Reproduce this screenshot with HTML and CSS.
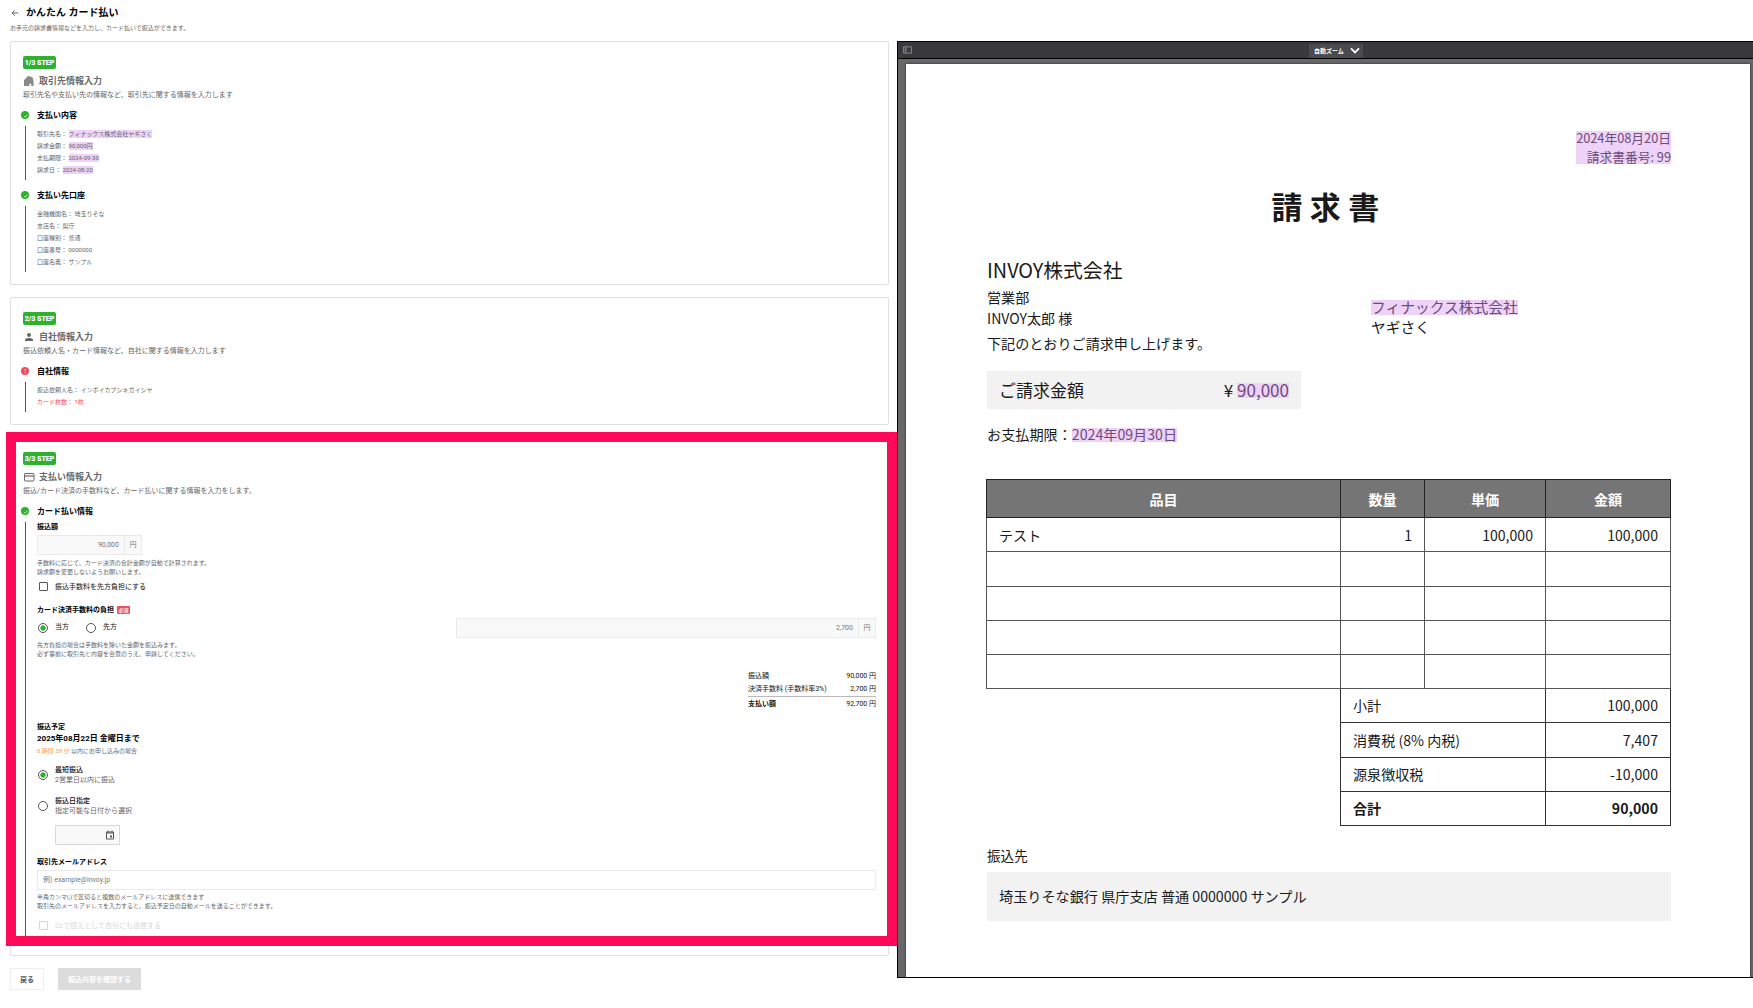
FILE: index.html
```html
<!DOCTYPE html>
<html lang="ja">
<head>
  <meta charset="UTF-8" />
  <meta name="viewport" content="width=device-width, initial-scale=1.0" />
  <title>かんたん カード払い</title>
  <link rel="stylesheet" href="styles.css">
</head>
<body>
  <!-- ヘッダー -->
  <header>
    <div class="page-title">
      <svg class="back-icon" viewBox="0 0 8 8"><path d="M7.2 4H1.2M3.8 1.3L1.1 4l2.7 2.7" fill="none" stroke="#555" stroke-width="0.9"/></svg>
      <h1>かんたん カード払い</h1>
    </div>
    <p class="lead">お手元の請求書情報などを入力し、カード払いで振込ができます。</p>
  </header>

  <div class="layout">
    <main>
      <!-- STEP 1 -->
      <section class="card">
        <span class="step">1/3 STEP</span>
        <h2>
          <svg class="title-icon" viewBox="0 0 12 12"><path d="M1 11V5l2.5-2V2L6 1l3.6 1.4L10.6 6v5H8.2V8.8H6.4V11z" fill="#8a8a8a"/></svg>
          取引先情報入力
        </h2>
        <p class="desc">取引先名や支払い先の情報など、取引先に関する情報を入力します</p>

        <h3><svg class="state" viewBox="0 0 8 8"><circle cx="4" cy="4" r="4" fill="#2fb12f"/><path d="M3.2 5.2l1 .9 2.3-2.5" fill="none" stroke="#d5f5d5" stroke-width=".8"/></svg>支払い内容</h3>
        <div class="detail">
          <p>取引先名： <mark>フィナックス株式会社ヤギさく</mark></p>
          <p>請求金額： <mark>90,000円</mark></p>
          <p>支払期限： <mark>2024-09-30</mark></p>
          <p>請求日： <mark>2024-08-20</mark></p>
        </div>

        <h3 class="next"><svg class="state" viewBox="0 0 8 8"><circle cx="4" cy="4" r="4" fill="#2fb12f"/><path d="M3.2 5.2l1 .9 2.3-2.5" fill="none" stroke="#d5f5d5" stroke-width=".8"/></svg>支払い先口座</h3>
        <div class="detail">
          <p>金融機関名： 埼玉りそな</p>
          <p>支店名： 県庁</p>
          <p>口座種別： 普通</p>
          <p>口座番号： 0000000</p>
          <p>口座名義： サンプル</p>
        </div>
      </section>

      <!-- STEP 2 -->
      <section class="card">
        <span class="step">2/3 STEP</span>
        <h2>
          <svg class="title-icon" viewBox="0 0 12 12"><circle cx="6" cy="4.1" r="2" fill="#666"/><path d="M2 10V8.9C2 7.6 4.4 7 6 7s4 .6 4 1.9V10z" fill="#666"/></svg>
          自社情報入力
        </h2>
        <p class="desc">振込依頼人名・カード情報など、自社に関する情報を入力します</p>

        <h3><svg class="state" viewBox="0 0 8 8"><circle cx="4" cy="4" r="4" fill="#f04e5e"/><path d="M4 1.9v2.4M4 5.2v.9" stroke="#ffc4c9" stroke-width=".9"/></svg>自社情報</h3>
        <div class="detail">
          <p>振込依頼人名： インボイカブシキガイシヤ</p>
          <p class="error">カード枚数： 1枚</p>
        </div>
      </section>

      <!-- STEP 3 -->
      <section class="card current">
        <span class="step">3/3 STEP</span>
        <h2>
          <svg class="title-icon" viewBox="0 0 12 12"><rect x="1.5" y="2.5" width="9.5" height="7.5" rx=".6" fill="none" stroke="#666"/><path d="M1.5 5h9.5" stroke="#666" stroke-width="1.2"/></svg>
          支払い情報入力
        </h2>
        <p class="desc">振込/カード決済の手数料など、カード払いに関する情報を入力をします。</p>

        <h3><svg class="state" viewBox="0 0 8 8"><circle cx="4" cy="4" r="4" fill="#2fb12f"/><path d="M3.2 5.2l1 .9 2.3-2.5" fill="none" stroke="#d5f5d5" stroke-width=".8"/></svg>カード払い情報</h3>
        <div class="detail form">
          <label class="label first">振込額</label>
          <div class="amount small"><span class="value">90,000</span><span class="unit">円</span></div>
          <p class="help">手数料に応じて、カード決済の合計金額が自動で計算されます。<br>請求額を変更しないようお願いします。</p>
          <div class="check"><i class="box"></i>振込手数料を先方負担にする</div>

          <div class="label fee">カード決済手数料の負担<span class="required">必須</span></div>
          <div class="fee-row">
            <div class="radios">
              <i class="radio on"></i><span>当方</span>
              <i class="radio"></i><span>先方</span>
            </div>
            <div class="amount"><span class="value">2,700</span><span class="unit">円</span></div>
          </div>
          <p class="help fee-help">先方負担の場合は手数料を除いた金額を振込みます。<br>必ず事前に取引先と内容を合意のうえ、申請してください。</p>

          <div class="totals">
            <div><span>振込額</span><span>90,000 円</span></div>
            <div><span>決済手数料 (手数料率3%)</span><span>2,700 円</span></div>
            <div class="sum"><b>支払い額</b><span>92,700 円</span></div>
          </div>

          <div class="label schedule">振込予定</div>
          <p class="deadline">2025年08月22日 金曜日まで</p>
          <p class="remain"><em>6 時間 38 分</em> 以内にお申し込みの場合</p>

          <div class="option">
            <i class="radio on"></i>
            <div><b>最短振込</b><span>2営業日以内に振込</span></div>
          </div>
          <div class="option second">
            <i class="radio"></i>
            <div><b>振込日指定</b><span>指定可能な日付から選択</span></div>
          </div>
          <div class="date-input">
            <svg viewBox="0 0 10 10"><path d="M1.5 2h7v7h-7zM1.5 3h7M3 .6v1.6M7 .6v1.6" fill="none" stroke="#555"/><rect x="5" y="5.5" width="2" height="2" fill="#555"/></svg>
          </div>

          <label class="label mail">取引先メールアドレス</label>
          <div class="mail-input">例) example@invoy.jp</div>
          <p class="help mail-help">半角カンマ(,)で区切ると複数のメールアドレスに送信できます<br>取引先のメールアドレスを入力すると、振込予定日の自動メールを送ることができます。</p>
          <div class="check disabled"><i class="box"></i>Ccで控えとして自分にも送信する</div>
        </div>
        <div class="focus-frame"></div>
      </section>

      <div class="actions">
        <button class="btn-back">戻る</button>
        <button class="btn-confirm" disabled>振込内容を確認する</button>
      </div>
    </main>

    <!-- 請求書プレビュー -->
    <aside class="viewer">
      <div class="toolbar">
        <svg class="side-icon" viewBox="0 0 10 8"><path d="M.5.5h9v7h-9zM3.3.5v7" fill="none" stroke="#8f8f93"/><path d="M1.2 1v6M2.4 1v6" stroke="#77777b" stroke-width=".6"/></svg>
        <div class="zoom">自動ズーム<svg viewBox="0 0 10 7"><path d="M1 1.4l4 4 4-4" fill="none" stroke="#fff" stroke-width="1.8"/></svg></div>
      </div>
      <div class="canvas">
        <div class="sheet">
          <div class="meta">2024年08月20日<br>請求書番号: 99</div>
          <div class="doc-title">請求書</div>
          <div class="client">INVOY株式会社</div>
          <div class="parties">
            <div class="to">
              <p>営業部</p>
              <p>INVOY太郎 様</p>
              <p class="greeting">下記のとおりご請求申し上げます。</p>
            </div>
            <div class="from">
              <p><mark>フィナックス株式会社</mark></p>
              <p>ヤギさく</p>
            </div>
          </div>
          <div class="bill"><span>ご請求金額</span><span>¥ <mark>90,000</mark></span></div>
          <p class="due">お支払期限：<mark>2024年09月30日</mark></p>

          <table>
            <colgroup><col class="c-item"><col class="c-qty"><col class="c-unit"><col class="c-price"></colgroup>
            <tr><th>品目</th><th>数量</th><th>単価</th><th>金額</th></tr>
            <tr class="row"><td class="left">テスト</td><td>1</td><td>100,000</td><td>100,000</td></tr>
            <tr class="row odd"><td></td><td></td><td></td><td></td></tr>
            <tr class="row"><td></td><td></td><td></td><td></td></tr>
            <tr class="row"><td></td><td></td><td></td><td></td></tr>
            <tr class="row"><td></td><td></td><td></td><td></td></tr>
            <tr class="row dark"><td class="blank"></td><td class="left" colspan="2">小計</td><td>100,000</td></tr>
            <tr class="row odd dark"><td class="blank"></td><td class="left" colspan="2">消費税 (8% 内税)</td><td>7,407</td></tr>
            <tr class="row dark"><td class="blank"></td><td class="left" colspan="2">源泉徴収税</td><td>-10,000</td></tr>
            <tr class="row total dark"><td class="blank"></td><td class="left" colspan="2">合計</td><td>90,000</td></tr>
          </table>

          <p class="bank-label">振込先</p>
          <div class="bank">埼玉りそな銀行 県庁支店 普通 0000000 サンプル</div>
        </div>
      </div>
    </aside>
  </div>
</body>
</html>
```
FILE: styles.css
```css
:root {
  --green: #2fb12f;
  --red: #f04e5e;
  --pink: #ff0a5b;
  --mark: #eed2f8;
  --text: #111;
  --sub: #666;
  --line: #e0e0e0;
}

* {
  box-sizing: border-box;
  margin: 0;
  padding: 0;
}

body {
  font-family: Roboto, "Noto Sans CJK JP", sans-serif;
  background-color: #fff;
  color: var(--text);
  width: 1753px;
  height: 1008px;
  overflow: hidden;
}

i,
em {
  font-style: normal;
}

svg {
  display: block;
  flex: none;
}

mark {
  background-color: var(--mark);
  color: inherit;
}

header {
  height: 41px;
  padding: 6px 10px 0;
}

.page-title {
  display: flex;
  align-items: center;
  height: 13px;
}

.back-icon {
  width: 8px;
  height: 8px;
  margin: 1px 7px 0 1px;
}

h1 {
  font-size: 10px;
  line-height: 13px;
  color: #000;
}

.lead {
  margin-top: 4px;
  font-size: 6px;
  line-height: 9px;
  color: var(--sub);
}

.layout {
  display: flex;
  align-items: flex-start;
}

main {
  width: 879px;
  margin-left: 10px;
}

/* カード */
.card {
  position: relative;
  margin-bottom: 12px;
  padding: 14px 12px 12px;
  border: 1px solid var(--line);
  border-radius: 2px;
}

.step {
  display: block;
  width: 33px;
  height: 13px;
  border-radius: 2px;
  background-color: var(--green);
  color: #fff;
  font-size: 7px;
  font-weight: 900;
  line-height: 14px;
  text-align: center;
  white-space: nowrap;
}

h2 {
  display: flex;
  align-items: center;
  gap: 4px;
  height: 12px;
  margin-top: 6px;
  color: #6a6a6a;
  font-size: 9px;
  font-weight: 700;
  line-height: 12px;
}

.title-icon {
  width: 12px;
  height: 12px;
}

.desc {
  margin-top: 3px;
  font-size: 7px;
  line-height: 10px;
  color: var(--sub);
}

h3 {
  display: flex;
  align-items: center;
  gap: 8px;
  height: 11px;
  margin: 10px 0 5px -2px;
  color: #000;
  font-size: 8px;
  line-height: 11px;
}

.state {
  width: 8px;
  height: 8px;
  margin-bottom: 1px;
}

.detail {
  margin-left: 2px;
  padding: 2px 0 4px 11px;
  border-left: 1px solid #555;
  color: var(--sub);
  font-size: 6px;
  line-height: 12px;
}

.detail p {
  height: 12px;
}

.detail mark {
  display: inline-block;
  line-height: 8px;
}

.detail .error {
  color: var(--red);
}

/* 支払い情報フォーム */
.detail.form {
  padding: 0 0 12px 11px;
  color: var(--text);
  font-size: 7px;
  line-height: 10px;
}

.form p {
  height: auto;
}

.label {
  display: flex;
  align-items: center;
  height: 10px;
  color: #000;
  font-weight: 700;
}

.amount {
  display: flex;
  height: 20px;
  width: 420px;
  border: 1px solid #eaeaea;
  background-color: #f9f9f9;
  color: #777;
  line-height: 18px;
}

.amount.small {
  width: 105px;
  margin-top: 3px;
}

.amount .value {
  flex: 1;
  padding-right: 5px;
  text-align: right;
}

.amount .unit {
  width: 17px;
  border-left: 1px solid #eaeaea;
  text-align: center;
}

.form .help {
  margin-top: 3px;
  color: var(--sub);
  font-size: 6px;
  line-height: 9px;
}

.check {
  display: flex;
  align-items: center;
  gap: 7px;
  height: 11px;
  margin-top: 5px;
  padding-left: 2px;
}

.box {
  width: 9px;
  height: 9px;
  border: 1px solid #555;
  border-radius: 1px;
}

.check.disabled {
  margin-top: 10px;
  color: #d6d6d6;
}

.check.disabled .box {
  border-color: #d6d6d6;
}

.label.fee {
  margin-top: 13px;
}

.required {
  width: 13px;
  height: 8px;
  margin-left: 3px;
  border-radius: 1px;
  background-color: var(--red);
  color: #fff;
  font-size: 5px;
  font-weight: 500;
  line-height: 8px;
  text-align: center;
}

.fee-row {
  display: flex;
  justify-content: space-between;
  margin-top: 3px;
}

.radios {
  display: flex;
  align-items: center;
}

.radios span {
  width: 30px;
  margin-left: 7px;
  padding-bottom: 2px;
}

.radio {
  flex: none;
  width: 10px;
  height: 10px;
  margin-left: 1px;
  border: 1px solid #555;
  border-radius: 50%;
}

.radio.on {
  background: radial-gradient(circle, var(--green) 2.3px, #fff 3px);
}

.form .fee-help,
.form .mail-help {
  margin-top: 2px;
}

.totals {
  width: 128px;
  margin: 12px 0 0 auto;
  line-height: 13px;
}

.totals div {
  display: flex;
  justify-content: space-between;
}

.totals .sum {
  border-top: 1px solid #bbb;
  line-height: 14px;
}

.label.schedule {
  margin-top: 11px;
}

.form .deadline {
  margin-top: 1px;
  color: #000;
  font-size: 8px;
  font-weight: 700;
  line-height: 11px;
}

.form .remain {
  margin-top: 2px;
  color: var(--sub);
  font-size: 6px;
  line-height: 9px;
}

.remain em {
  color: #f5a04c;
}

.option {
  display: flex;
  align-items: center;
  gap: 7px;
  height: 20px;
  margin-top: 10px;
}

.option.second {
  margin-top: 11px;
}

.option b,
.option span {
  display: block;
}

.option b {
  font-weight: 500;
}

.option span {
  color: var(--sub);
}

.date-input {
  display: flex;
  align-items: center;
  justify-content: flex-end;
  width: 65px;
  height: 20px;
  margin: 9px 0 0 18px;
  padding-right: 4px;
  border: 1px solid #d8d8d8;
  border-radius: 1px;
  background-color: #f9f9f9;
}

.date-input svg {
  width: 10px;
  height: 10px;
}

.label.mail {
  margin-top: 12px;
}

.mail-input {
  height: 20px;
  margin-top: 3px;
  padding-left: 5px;
  border: 1px solid #eaeaea;
  color: #777;
  line-height: 18px;
}

/* 入力中ステップの強調枠 */
.focus-frame {
  position: absolute;
  top: -6px;
  left: -5px;
  width: 891px;
  height: 514px;
  border: 10px solid var(--pink);
}

.actions {
  display: flex;
  gap: 14px;
}

.actions button {
  height: 22px;
  font-family: inherit;
  font-size: 7px;
  font-weight: 700;
}

.btn-back {
  width: 34px;
  border: 1px solid #eee;
  background-color: #fff;
  color: #555;
}

.btn-confirm {
  width: 83px;
  border: none;
  border-radius: 1px;
  background-color: #dcdcdc;
  color: #fff;
}

/* PDFビューア */
.viewer {
  width: 856px;
  height: 937px;
  margin-left: 8px;
  border: 1px solid #000;
  border-right: none;
  overflow: hidden;
  font-family: "Noto Sans CJK JP", sans-serif;
}

.toolbar {
  display: flex;
  align-items: center;
  height: 17px;
  padding-left: 5px;
  border-bottom: 1px solid #000;
  background-color: #38383d;
}

.side-icon {
  width: 9px;
  height: 8px;
}

.zoom {
  display: flex;
  align-items: center;
  justify-content: space-between;
  width: 54px;
  height: 14px;
  margin: 1px 0 0 397px;
  padding: 0 3px 0 5px;
  background-color: #4a4a4f;
  color: #fff;
  font-size: 6px;
  font-weight: 700;
  line-height: 12px;
}

.zoom svg {
  width: 10px;
  height: 7px;
}

.canvas {
  height: 918px;
  padding: 5px 3px 0 8px;
  background-color: #686868;
}

.sheet {
  height: 913px;
  padding: 64px 79px 0 81px;
  background-color: #fff;
  box-shadow: 0 0 2px #222;
  color: #1a1a1a;
  font-size: 14.1px;
  line-height: 21px;
}

.sheet mark {
  display: inline-block;
  height: 14px;
  color: #6b4d78;
  line-height: 13px;
}

.meta {
  width: 95px;
  height: 38px;
  margin-left: auto;
  background: linear-gradient(var(--mark), var(--mark)) 0 3px / 95px 33px no-repeat;
  color: #6b4d78;
  font-size: 12.75px;
  line-height: 19px;
  text-align: right;
  white-space: nowrap;
}

.doc-title {
  margin-top: 20px;
  font-size: 31px;
  font-weight: 700;
  letter-spacing: 7.4px;
  line-height: 40px;
  text-align: center;
}

.client {
  margin-top: 28px;
  font-size: 19.85px;
  line-height: 31px;
}

.parties {
  display: grid;
  grid-template-columns: 384px 1fr;
  margin-top: 2px;
}

.greeting {
  margin-top: 4px;
}

.from {
  padding-top: 10px;
  font-size: 14.75px;
  line-height: 20px;
}

.from mark {
  height: 15px;
}

.bill {
  display: flex;
  justify-content: space-between;
  width: 314px;
  height: 38px;
  margin-top: 17px;
  padding: 0 12px;
  background-color: #f2f2f2;
  font-size: 17px;
  line-height: 37px;
}

.bill mark {
  height: 15px;
  line-height: 14px;
}

.due {
  height: 20px;
  margin-top: 15px;
  font-size: 14.15px;
  line-height: 20px;
  white-space: nowrap;
}

table {
  width: 684px;
  margin: 35px 0 0 -1px;
  border-collapse: collapse;
  table-layout: fixed;
}

.c-item { width: 354px; }
.c-qty { width: 84px; }
.c-unit { width: 121px; }
.c-price { width: 125px; }

th {
  height: 38px;
  border: 1px solid #222;
  background-color: #757575;
  color: #fff;
  line-height: 20px;
}

td {
  height: 34px;
  padding: 0 12px;
  border: 1px solid #555;
  line-height: 20px;
  text-align: right;
}

.odd td {
  height: 35px;
}

.dark td {
  padding-bottom: 1px;
  border-color: #333;
}

td.left {
  text-align: left;
}

td.blank {
  border: none;
  border-top: 1px solid #222;
}

.dark + .dark td.blank {
  border-top: none;
}

.total {
  font-weight: 700;
}

.bank-label {
  margin-top: 19px;
  font-size: 13.6px;
  line-height: 20px;
}

.bank {
  height: 49px;
  margin-top: 7px;
  padding-left: 12px;
  background-color: #f2f2f2;
  font-size: 14.15px;
  line-height: 48px;
}
```
